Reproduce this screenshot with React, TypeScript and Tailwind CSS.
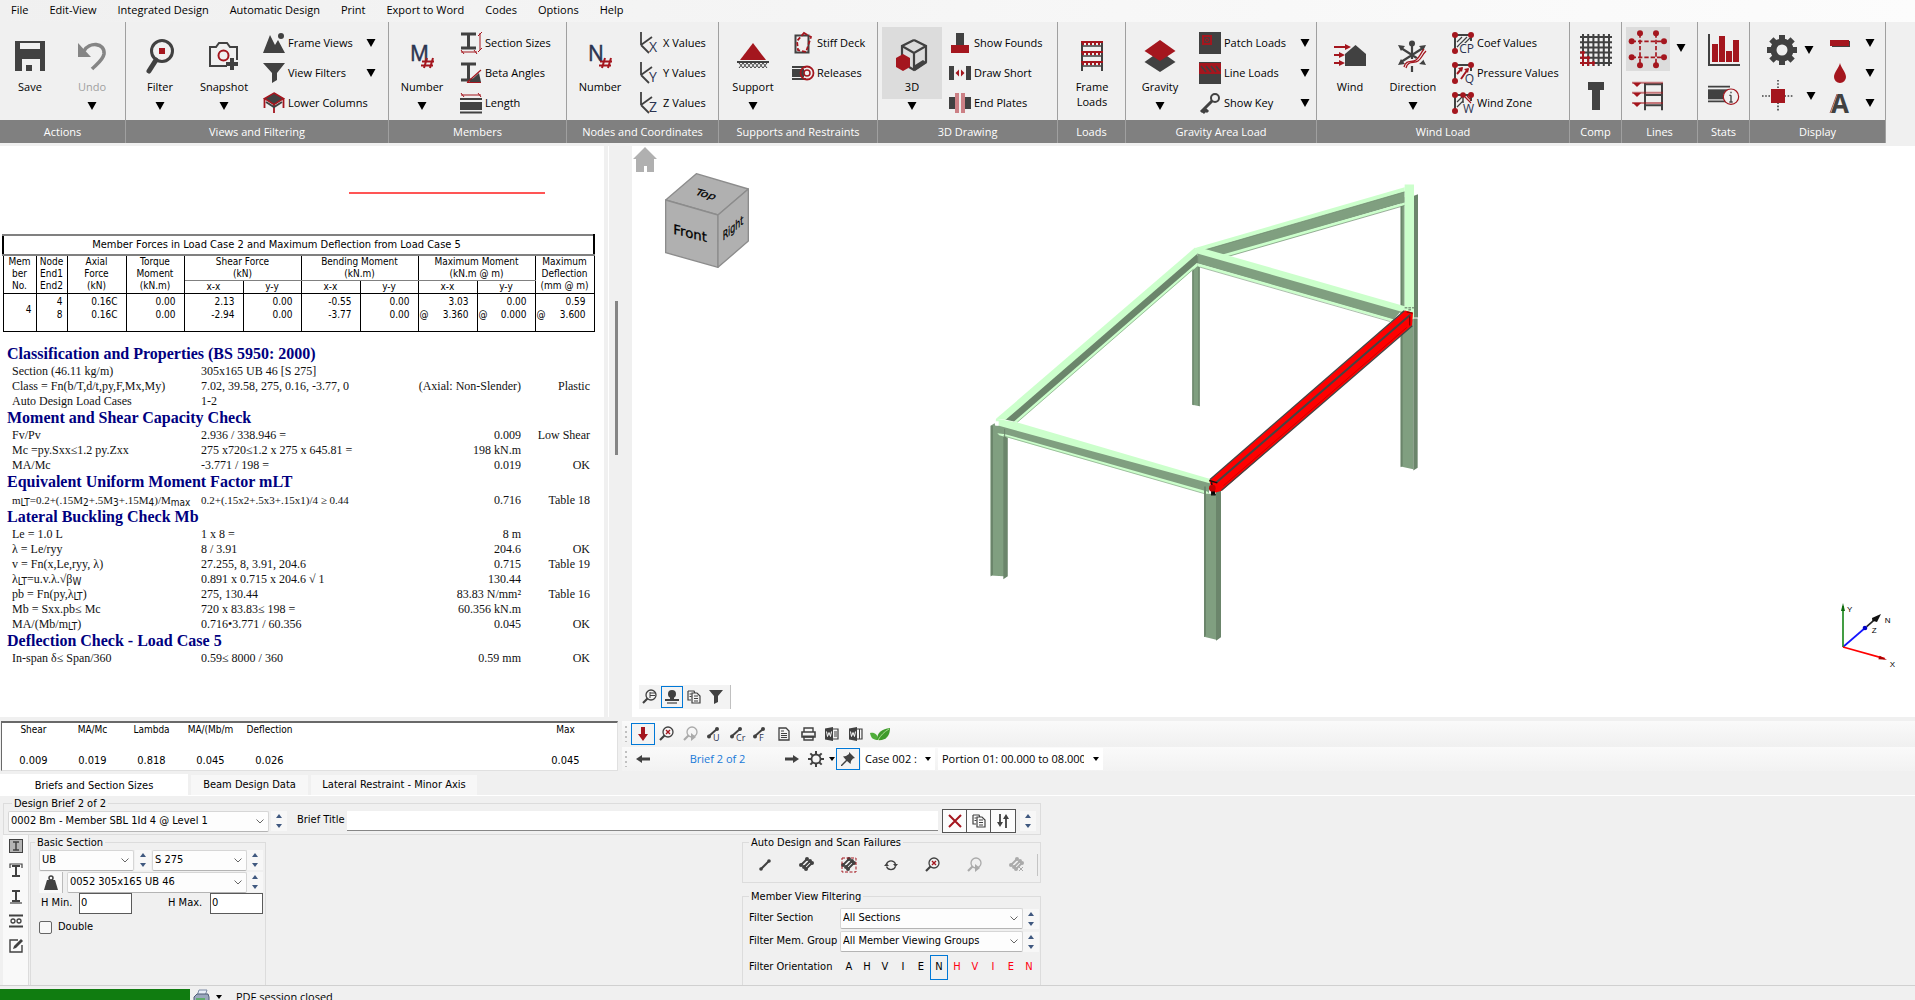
import React from 'react';

const D = '#414141';
const R = '#a4161e';
const UI = "font-['Open_Sans','Noto_Sans',sans-serif]";

type Kids = { children?: React.ReactNode };

function Ic({ w, h, vb, children }: { w: number; h: number; vb?: string } & Kids) {
  return (
    <svg width={w} height={h} viewBox={vb ?? `0 0 ${w} ${h}`} fill="none" className="shrink-0 overflow-visible" aria-hidden="true">
      {children}
    </svg>
  );
}

function Caret() {
  return (
    <Ic w={10} h={8}>
      <path d="M0.5 0h9L5 8z" fill="#000" />
    </Ic>
  );
}

/* ---------- ribbon building blocks ---------- */

function Group({ label, width, children }: { label: string; width: string } & Kids) {
  return (
    <section className={`${width} flex shrink-0 flex-col border-r border-[#a0a0a0]`}>
      <div className="flex h-[98px] pt-1.5">{children}</div>
      <h2 className="flex h-[23px] items-center justify-center bg-[#808080] pt-px text-white">{label}</h2>
    </section>
  );
}

function Big({ icon, label, width, arrow, muted, second }: { icon: React.ReactNode; label: string; width: string; arrow?: boolean; muted?: boolean; second?: string }) {
  return (
    <button className={`${width} flex shrink-0 flex-col items-center`}>
      <span className="flex h-[51px] items-center justify-center pt-1">{icon}</span>
      <span className={muted ? 'leading-[15px] text-[#a0a0a0]' : 'leading-[15px]'}>{label}</span>
      {second && <span className="leading-[15px]">{second}</span>}
      {arrow && (
        <span className="mt-2">
          <Caret />
        </span>
      )}
    </button>
  );
}

function Small({ icon, label, arrow, name }: { icon: React.ReactNode; label?: string; arrow?: boolean; name?: string }) {
  return (
    <button className="flex h-[30px] w-full items-center gap-0.5 whitespace-nowrap" aria-label={name}>
      <span className="flex w-6 justify-center">{icon}</span>
      {label && <span>{label}</span>}
      {arrow && (
        <span className="ml-auto">
          <Caret />
        </span>
      )}
    </button>
  );
}

/* ---------- ribbon icons ---------- */

const SaveIcon = (
  <Ic w={30} h={30}>
    <path fillRule="evenodd" fill={D} d="M0 0h30v30h-5V18H7v12H0zM5 2v6h20V2z" />
    <rect x="11" y="24" width="6" height="6" fill={D} />
  </Ic>
);
const UndoIcon = (
  <Ic w={30} h={30}>
    <path d="M7 10C12 1 28 1 27 13C26 19 20 23 15 28" stroke="#858585" strokeWidth="3.6" />
    <path d="M1 2v14h13z" fill="#858585" />
  </Ic>
);
const FilterIcon = (
  <Ic w={28} h={36}>
    <circle cx="16" cy="13" r="10.5" stroke={D} strokeWidth="3" />
    <path d="M10 22L3 33" stroke={D} strokeWidth="5" strokeLinecap="round" />
    <rect x="13" y="10" width="6" height="6" fill={R} />
  </Ic>
);
const SnapshotIcon = (
  <Ic w={32} h={30}>
    <path d="M19 25H2V6h6l3-4h8l3 4h7v13" stroke={D} strokeWidth="2" />
    <circle cx="15.5" cy="14.500" r="5" stroke={R} strokeWidth="2" />
    <path d="M24 17v12M18 23h12" stroke={D} strokeWidth="4" />
  </Ic>
);
const FrameViewsIcon = (
  <Ic w={22} h={20}>
    <path d="M0 20L7 2l5 10 3-5 7 13z" fill={D} />
    <circle cx="18" cy="3" r="3" fill={D} />
  </Ic>
);
const FunnelIcon = (
  <Ic w={22} h={20}>
    <path d="M0 0h22l-8 10v7l-5 3V10z" fill={D} />
  </Ic>
);
const LowerColumnsIcon = (
  <Ic w={22} h={22}>
    <path d="M11 1l9.500 5.500-9.500 6-9.500-6z" fill={D} stroke={R} strokeWidth="1.500" />
    <path d="M1.500 6v10M20.500 6v10M11 13v8" stroke={R} strokeWidth="1.800" />
    <path d="M3 10l8 5 8-5" stroke={D} strokeWidth="2" />
  </Ic>
);
const SectionSizesIcon = (
  <Ic w={22} h={22}>
    <path d="M1 2h15M1 16h15M8.500 2v14" stroke={D} strokeWidth="3" />
    <path d="M20 1v17M18 4l4-4M18 20l4-4M1 20h16M1 18l3 4M14 18l3 4" stroke={R} strokeWidth="1" />
  </Ic>
);
const BetaIcon = (
  <Ic w={22} h={22}>
    <path d="M1 2h15M1 18h12M8.500 2v16" stroke={D} strokeWidth="3" />
    <path d="M9 20L19 11l2 9z" fill={D} />
    <path d="M7 20.500h14M7 20.500L21 8" stroke={R} strokeWidth="1.200" />
  </Ic>
);
const LengthIcon = (
  <Ic w={22} h={22}>
    <path d="M1 3h20M1 1l3 4M18 1l3 4" stroke={R} strokeWidth="1" />
    <path d="M0 7h22M0 20.500h22" stroke={D} strokeWidth="2" />
    <rect x="0" y="10" width="22" height="8" fill={D} />
  </Ic>
);
function NumberIcon({ c }: { c: string }) {
  return (
    <Ic w={24} h={26}>
      <text x="0" y="18" fontSize="21" fill="#2b3350" stroke="#2b3350" strokeWidth="0.500" fontFamily="Open Sans, sans-serif">{c}</text>
      <path d="M17 15l-3 10M23 15l-3 10M12 18.500h12M11 22.500h12" stroke={R} strokeWidth="2" />
    </Ic>
  );
}
function AxisIcon({ c }: { c: string }) {
  return (
    <Ic w={20} h={22}>
      <path d="M2 0v13M2 13L13 5M2 13l8 8" stroke={D} strokeWidth="1.800" />
      <text x="10" y="20" fontSize="14" fill="#2b3350" fontFamily="Open Sans, sans-serif">{c}</text>
    </Ic>
  );
}
const SupportIcon = (
  <Ic w={32} h={26}>
    <path d="M16 0l13 17H3z" fill={R} />
    <path d="M0 19h32" stroke={D} strokeWidth="2" />
    <path d="M2 25l4-5 4 5 4-5 4 5 4-5 4 5 4-5M2 20l4 5 4-5 4 5 4-5 4 5 4-5 4 5" stroke={D} strokeWidth="1" />
  </Ic>
);
const StiffDeckIcon = (
  <Ic w={20} h={22}>
    <rect x="2.500" y="3.500" width="13" height="17" stroke={D} strokeWidth="2" />
    <path d="M11 1l7 4-5 15-8-2-1-9z" stroke={R} strokeWidth="1.800" strokeDasharray="4 2" />
  </Ic>
);
const ReleasesIcon = (
  <Ic w={24} h={16}>
    <path d="M1 2h14M1 14h14" stroke={D} strokeWidth="2" />
    <rect x="1" y="4" width="12" height="8" fill={D} />
    <circle cx="16" cy="8" r="6.500" stroke={R} strokeWidth="1.800" />
    <circle cx="16" cy="8" r="3" stroke={R} strokeWidth="1.500" />
  </Ic>
);
const CubeIcon = (
  <Ic w={34} h={34}>
    <path d="M19 2l12 6v16l-12 8-5-3M19 2L7 8v9M7 8l12 7 12-7M19 15v16" stroke={D} strokeWidth="2.200" />
    <path d="M20 33l12-8-4-3-8 5z" fill={D} />
    <path d="M8 16l7 4v9l-7 4-7-4v-9z" fill={R} />
  </Ic>
);
const FoundsIcon = (
  <Ic w={20} h={20}>
    <rect x="6" y="0" width="8" height="12" fill={D} />
    <rect x="1" y="12" width="18" height="8" fill={R} />
  </Ic>
);
const DrawShortIcon = (
  <Ic w={22} h={14}>
    <path d="M0 0h5v14H0zM17 0h5v14h-5z" fill={D} />
    <path d="M10 3.500v7L6.500 7zM12 3.500v7L15.500 7z" fill={R} />
  </Ic>
);
const EndPlatesIcon = (
  <Ic w={22} h={20}>
    <path d="M0 4h6v12H0zM16 4h6v12h-6z" fill={D} />
    <path d="M6 0h4v20H6zM12 0h4v20h-4z" fill="#cc8085" />
  </Ic>
);
const FrameLoadsIcon = (
  <Ic w={24} h={32}>
    <path d="M2 1v30M22 1v30" stroke={D} strokeWidth="2" />
    {[2, 12, 22].map((y) => (
      <g key={y}>
        <path d={`M1 ${y}h22`} stroke={R} strokeWidth="2" />
        <path d={`M2 ${y + 2}h20`} stroke={R} strokeWidth="2.500" strokeDasharray="2 2" />
        <path d={`M1 ${y + 4}h22`} stroke={D} strokeWidth="1.500" />
      </g>
    ))}
  </Ic>
);
const GravityIcon = (
  <Ic w={32} h={32}>
    <path d="M16 11l15.500 11L16 32 0.500 22z" fill={D} />
    <path d="M16 0l15.500 11L16 21 0.500 11z" fill={R} />
  </Ic>
);
const PatchIcon = (
  <Ic w={22} h={22}>
    <rect width="22" height="22" fill={D} />
    <rect x="3" y="3" width="10" height="10" fill={R} />
    <path d="M5.500 5.500h5v5h-5zM5.500 5.500l5 5M10.500 5.500l-5 5" stroke={D} strokeWidth="0.800" />
  </Ic>
);
const LineLoadsIcon = (
  <Ic w={22} h={22}>
    <rect width="22" height="22" fill={D} />
    <rect y="1" width="22" height="11" fill={R} />
    <path d="M2 4l5 6M7 4l5 6M12 4l5 6M17 4l4 5" stroke={D} strokeWidth="1.500" />
  </Ic>
);
const KeyIcon = (
  <Ic w={22} h={20}>
    <circle cx="16" cy="5" r="4" stroke={D} strokeWidth="2" />
    <path d="M13 8L2 19M5 15l4 4M3 17l3 3" stroke={D} strokeWidth="3" />
  </Ic>
);
const WindIcon = (
  <Ic w={32} h={24}>
    <path d="M11 10L21.500 1 32 10v12H11z" fill={D} />
    <path d="M0 3h12M0 11h6M0 19h6" stroke={R} strokeWidth="2" />
    <path d="M11 0l6 3-6 3zM5 8l6 3-6 3zM5 16l6 3-6 3z" fill={R} />
  </Ic>
);
const DirectionIcon = (
  <Ic w={32} h={32}>
    <circle cx="15" cy="3.500" r="3" fill={D} />
    <path d="M15 4v15M15 26v6M4 8l22 14M26 8L4 22" stroke={D} strokeWidth="2.200" />
    <path d="M1 5l7 1-4 5zM29 5l-7 1 4 5zM1 25l7-1-4-5zM29 25l-7-1 4-5z" fill={D} />
    <path d="M8 27c2-8 8-4 12-7s4-5 8-9M10 29c2-8 8-4 12-7s4-5 8-9" stroke="#f0f0f0" strokeWidth="3" />
    <path d="M7 27c2-8 8-4 12-7s4-6 8-11M9 28c2-8 8-4 12-7s4-6 8-10" stroke={R} strokeWidth="1.300" />
  </Ic>
);
function ZoneIcon({ c, kind }: { c: string; kind: 'hatch' | 'arrows' | 'zones' }) {
  return (
    <Ic w={22} h={22}>
      <path d="M3 19V3h16v6" stroke={D} strokeWidth="2" />
      {kind === 'hatch' && <path d="M5 10l5-5M5 15L15 5M8 16L18 6" stroke={D} strokeWidth="1.200" />}
      {kind === 'arrows' && (
        <>
          <path d="M5 12l5-6M9 17l7-10" stroke={R} strokeWidth="2" />
          <path d="M6 6l5-1-1 5zM12 7l5-1-1 5z" fill={R} />
        </>
      )}
      {kind === 'zones' && (
        <>
          <path d="M11 3v8" stroke={D} strokeWidth="1.500" />
          <path d="M5 10l5-5M5 15l6-6" stroke={D} strokeWidth="1.200" />
          <path d="M12 4l7 7M15 4l4 4" stroke={R} strokeWidth="1.200" />
          <circle cx="11" cy="3" r="2.800" fill={R} />
        </>
      )}
      <circle cx="3" cy="3" r="3" fill={R} />
      <circle cx="19" cy="3" r="3" fill={R} />
      <circle cx="3" cy="19" r="3" fill={R} />
      <text x="22" y="21" textAnchor="end" fontSize="12" fill="#2b3350" stroke="#f0f0f0" strokeWidth="2" paintOrder="stroke" fontFamily="Open Sans, sans-serif">{c}</text>
    </Ic>
  );
}
const GridIcon = (
  <Ic w={32} h={32}>
    <path d="M3 0v32M8.200 0v32M13.400 0v32M18.600 0v32M23.800 0v32M29 0v32M0 3h32M0 8.200h32M0 13.400h32M0 18.600h32M0 23.800h32M0 29h32" stroke={D} strokeWidth="2" />
    <path d="M3 17v15M8.200 22v10M13.400 27v5M0 18.600h5M0 23.800h10M0 29h15" stroke={R} strokeWidth="2" />
  </Ic>
);
const TIcon = (
  <Ic w={16} h={28}>
    <path d="M0 0h16v8h-4v20H4V8H0z" fill={D} />
  </Ic>
);
const LinesIcon = (
  <Ic w={38} h={38} vb="210 32 114 114">
    <path d="M218 66h97M218 114h97M243 42v96M291 42v96" stroke={R} strokeWidth="5" strokeDasharray="13 6" />
    {[[243, 42], [291, 42], [243, 138], [291, 138], [218, 66], [315, 66], [218, 114], [315, 114]].map(([x, y]) => (
      <circle key={`${x}-${y}`} cx={x} cy={y} r="9" fill={R} />
    ))}
  </Ic>
);
const LevelsIcon = (
  <Ic w={32} h={30} vb="219 184 96 90">
    <path d="M258 190v82M309 190v82M255 194h57M255 226h57M255 257h57" stroke={D} strokeWidth="6" />
    <path d="M219 189h93M219 219h93M219 250h93" stroke="#a4161e" strokeOpacity="0.55" strokeWidth="6" />
    <path d="M221 189h26l-13 13zM221 219h26l-13 13zM221 249h26l-13 13z" fill={R} />
  </Ic>
);
const StatsIcon = (
  <Ic w={32} h={32} vb="447 42 96 96">
    <path d="M450 42v93h93" stroke={D} strokeWidth="6" />
    <path d="M459 72h18v54h-18zM480 48h18v78h-18zM501 93h18v33h-18zM522 60h18v66h-18z" fill={R} />
  </Ic>
);
const InfoIcon = (
  <Ic w={32} h={20} vb="447 202 96 60">
    <path d="M447 204h66M447 248h66" stroke={D} strokeWidth="5" />
    <rect x="447" y="212" width="60" height="30" fill={D} />
    <circle cx="516" cy="234" r="23" fill="#f0f0f0" stroke={R} strokeWidth="3.500" />
    <path d="M516 230v20M511 250h10M511 230h5M516 219v5" stroke={D} strokeWidth="4" />
  </Ic>
);
const GearIcon = (
  <Ic w={30} h={30}>
    <circle cx="15" cy="15" r="8.500" stroke={D} strokeWidth="6" />
    {[0, 45, 90, 135, 180, 225, 270, 315].map((a) => (
      <rect key={a} x="12" y="0" width="6" height="6" fill={D} transform={`rotate(${a} 15 15)`} />
    ))}
  </Ic>
);
const TargetIcon = (
  <Ic w={32} h={32}>
    <path d="M16 0v32M0 16h32" stroke={D} strokeWidth="1.600" strokeDasharray="1.600 1.600" />
    <rect x="9" y="9" width="14" height="14" fill={R} />
  </Ic>
);

function Ribbon() {
  return (
    <div className="flex shrink-0 bg-[#f0f0f0]">
      <Group label="Actions" width="w-[126px]">
        <Big icon={SaveIcon} label="Save" width="w-[60px]" />
        <Big icon={UndoIcon} label="Undo" width="w-16" arrow muted />
      </Group>
      <Group label="Views and Filtering" width="w-[263px]">
        <Big icon={FilterIcon} label="Filter" width="w-[68px]" arrow />
        <Big icon={SnapshotIcon} label="Snapshot" width="w-[60px]" arrow />
        <div className="grow pr-3 pl-2">
          <Small icon={FrameViewsIcon} label="Frame Views" arrow />
          <Small icon={FunnelIcon} label="View Filters" arrow />
          <Small icon={LowerColumnsIcon} label="Lower Columns" />
        </div>
      </Group>
      <Group label="Members" width="w-[178px]">
        <Big icon={<NumberIcon c="M" />} label="Number" width="w-[66px]" arrow />
        <div className="grow pl-1">
          <Small icon={SectionSizesIcon} label="Section Sizes" />
          <Small icon={BetaIcon} label="Beta Angles" />
          <Small icon={LengthIcon} label="Length" />
        </div>
      </Group>
      <Group label="Nodes and Coordinates" width="w-[152px]">
        <Big icon={<NumberIcon c="N" />} label="Number" width="w-[66px]" />
        <div className="grow pl-1">
          <Small icon={<AxisIcon c="X" />} label="X Values" />
          <Small icon={<AxisIcon c="Y" />} label="Y Values" />
          <Small icon={<AxisIcon c="Z" />} label="Z Values" />
        </div>
      </Group>
      <Group label="Supports and Restraints" width="w-[159px]">
        <Big icon={SupportIcon} label="Support" width="w-[68px]" arrow />
        <div className="grow pl-1">
          <Small icon={StiffDeckIcon} label="Stiff Deck" />
          <Small icon={ReleasesIcon} label="Releases" />
        </div>
      </Group>
      <Group label="3D Drawing" width="w-[180px]">
        <div className="flex w-16 flex-col items-center pl-1">
          <button className="-mt-px flex h-[72px] w-[60px] flex-col items-center bg-[#dcdcdc]">
            <span className="flex h-[52px] items-center pt-1">{CubeIcon}</span>
            <span className="leading-[15px]">3D</span>
          </button>
          <button className="mt-[3px]" aria-label="3D options">
            <Caret />
          </button>
        </div>
        <div className="grow pl-1.5">
          <Small icon={FoundsIcon} label="Show Founds" />
          <Small icon={DrawShortIcon} label="Draw Short" />
          <Small icon={EndPlatesIcon} label="End Plates" />
        </div>
      </Group>
      <Group label="Loads" width="w-[68px]">
        <Big icon={FrameLoadsIcon} label="Frame" second="Loads" width="w-[68px]" />
      </Group>
      <Group label="Gravity Area Load" width="w-[191px]">
        <Big icon={GravityIcon} label="Gravity" width="w-[68px]" arrow />
        <div className="grow pr-1.5 pl-1">
          <Small icon={PatchIcon} label="Patch Loads" arrow />
          <Small icon={LineLoadsIcon} label="Line Loads" arrow />
          <Small icon={KeyIcon} label="Show Key" arrow />
        </div>
      </Group>
      <Group label="Wind Load" width="w-[253px]">
        <Big icon={WindIcon} label="Wind" width="w-[66px]" />
        <Big icon={DirectionIcon} label="Direction" width="w-[60px]" arrow />
        <div className="grow pl-2">
          <Small icon={<ZoneIcon c="CP" kind="hatch" />} label="Coef Values" />
          <Small icon={<ZoneIcon c="Q" kind="arrows" />} label="Pressure Values" />
          <Small icon={<ZoneIcon c="W" kind="zones" />} label="Wind Zone" />
        </div>
      </Group>
      <Group label="Comp" width="w-[52px]">
        <div className="flex grow flex-col items-center gap-4 pt-1.5">
          <button aria-label="Composite grid">{GridIcon}</button>
          <button aria-label="Composite tee">{TIcon}</button>
        </div>
      </Group>
      <Group label="Lines" width="w-[76px]">
        <div className="flex flex-col items-center gap-2.5 pl-1">
          <button className="-mt-px flex h-11 w-11 items-center justify-center bg-[#dcdcdc]" aria-label="Grid lines">{LinesIcon}</button>
          <button aria-label="Level lines">{LevelsIcon}</button>
        </div>
        <button className="mt-4 ml-1.5 h-2" aria-label="Grid line options">
          <Caret />
        </button>
      </Group>
      <Group label="Stats" width="w-[52px]">
        <div className="flex grow flex-col items-center gap-5 pt-1.5">
          <button aria-label="Statistics chart">{StatsIcon}</button>
          <button aria-label="Statistics details">{InfoIcon}</button>
        </div>
      </Group>
      <Group label="Display" width="w-[136px]">
        <div className="flex flex-col pt-0.5 pl-2.5">
          <button className="flex h-10 items-center gap-1" aria-label="Display settings">
            <span className="flex w-10 justify-center pl-1">{GearIcon}</span>
            <Caret />
          </button>
          <button className="flex h-12 items-center gap-1.5 pt-1" aria-label="Display target">
            <span className="flex w-10 justify-center pr-1">{TargetIcon}</span>
            <Caret />
          </button>
        </div>
        <div className="flex grow flex-col pr-2.5 pl-3">
          <Small arrow name="Line style" icon={<Ic w={20} h={8}><path d="M2 2h18v6H2z" fill={D} /><path d="M0 1h19v6H0z" fill={R} /></Ic>} />
          <Small arrow name="Colour" icon={<Ic w={12} h={20}><path d="M6 0c1 5 6 9 6 14a6 6 0 0 1-12 0C0 9 5 5 6 0z" fill={R} /></Ic>} />
          <Small
            arrow
            name="Font"
            icon={
              <Ic w={22} h={22}>
                <text x="2" y="21" fontSize="26" fontWeight="bold" fill={D} fontFamily="Open Sans, sans-serif">A</text>
                <path d="M1 21L8 2" stroke="#8a3b3f" strokeWidth="0.800" />
              </Ic>
            }
          />
        </div>
      </Group>
    </div>
  );
}

/* ---------- report pane ---------- */

function ForcesTable() {
  const cell = 'border border-black p-0 font-normal align-top';
  const num = 'border-x border-black p-0 text-right align-top';
  return (
    <table className="ml-0.5 w-[592px] table-fixed border-collapse border border-black text-[10px] leading-[13px]">
      <colgroup>
        {[33, 31, 59, 58, 59, 58, 59, 58, 59, 58, 59].map((w, i) => (
          <col key={i} style={{ width: w }} />
        ))}
      </colgroup>
      <thead className="leading-3">
        <tr>
          <th colSpan={11} className="h-5 border-2 border-[#808080] border-x-black p-0 pr-11 text-[11px] font-normal">
            Member Forces in Load Case 2 and Maximum Deflection from Load Case 5
          </th>
        </tr>
        <tr>
          <th rowSpan={2} className={cell}>Mem<br />ber<br />No.</th>
          <th rowSpan={2} className={cell}>Node<br />End1<br />End2</th>
          <th rowSpan={2} className={cell}>Axial<br />Force<br />(kN)</th>
          <th rowSpan={2} className={cell}>Torque<br />Moment<br />(kN.m)</th>
          <th colSpan={2} className="border border-black border-b-[#808080] p-0 align-top font-normal">Shear Force<br />(kN)</th>
          <th colSpan={2} className="border border-black border-b-[#808080] p-0 align-top font-normal">Bending Moment<br />(kN.m)</th>
          <th colSpan={2} className="border border-black border-b-[#808080] p-0 align-top font-normal">Maximum Moment<br />(kN.m @ m)</th>
          <th rowSpan={2} className={cell}>Maximum<br />Deflection<br />(mm @ m)</th>
        </tr>
        <tr>
          {['x-x', 'y-y', 'x-x', 'y-y', 'x-x', 'y-y'].map((t, i) => (
            <th key={i} className={cell}>{t}</th>
          ))}
        </tr>
      </thead>
      <tbody>
        <tr className="h-[38px]">
          <td className="border border-black p-0 pr-1 pb-1.5 text-right">4</td>
          <td className={`${num} pt-px pr-1`}>4<br />8</td>
          <td className={`${num} pt-px pr-2`}>0.16C<br />0.16C</td>
          {['0.00|0.00', '2.13|-2.94', '0.00|0.00', '-0.55|-3.77', '0.00|0.00'].map((v, i) => (
            <td key={i} className={`${num} pt-px pr-2`}>{v.split('|')[0]}<br />{v.split('|')[1]}</td>
          ))}
          {['3.03|3.360', '0.00|0.000', '0.59|3.600'].map((v) => (
            <td key={v} className={`${num} pt-px pr-2`}>
              {v.split('|')[0]}
              <span className="flex justify-between pl-px">
                <span>@</span>
                <span>{v.split('|')[1]}</span>
              </span>
            </td>
          ))}
        </tr>
      </tbody>
    </table>
  );
}

const S = ({ children }: Kids) => <span className="relative top-0.5 font-['DejaVu_Sans_Condensed',sans-serif] text-[10px]">{children}</span>;

type Row = [React.ReactNode, string, string, string];
const sections: { title: string; rows: Row[]; small?: boolean }[] = [
  {
    title: 'Classification and Properties (BS 5950: 2000)',
    rows: [
      ['Section (46.11 kg/m)', '305x165 UB 46 [S 275]', '', ''],
      ['Class = Fn(b/T,d/t,py,F,Mx,My)', '7.02, 39.58, 275, 0.16, -3.77, 0', '(Axial: Non-Slender)', 'Plastic'],
      ['Auto Design Load Cases', '1-2', '', ''],
    ],
  },
  {
    title: 'Moment and Shear Capacity Check',
    rows: [
      ['Fv/Pv', '2.936 / 338.946 =', '0.009', 'Low Shear'],
      ['Mc =py.Sxx≤1.2 py.Zxx', '275 x720≤1.2 x 275 x 645.81 =', '198 kN.m', ''],
      ['MA/Mc', '-3.771 / 198 =', '0.019', 'OK'],
    ],
  },
  {
    title: 'Equivalent Uniform Moment Factor mLT',
    small: true,
    rows: [
      [<>m<S>LT</S>=0.2+(.15M<S>2</S>+.5M<S>3</S>+.15M<S>4</S>)/M<S>max</S></>, '0.2+(.15x2+.5x3+.15x1)/4 ≥ 0.44', '0.716', 'Table 18'],
    ],
  },
  {
    title: 'Lateral Buckling Check Mb',
    rows: [
      ['Le = 1.0 L', '1 x 8 =', '8 m', ''],
      ['λ = Le/ryy', '8 / 3.91', '204.6', 'OK'],
      ['v = Fn(x,Le,ryy, λ)', '27.255, 8, 3.91, 204.6', '0.715', 'Table 19'],
      [<>λ<S>LT</S>=u.v.λ.√β<S>W</S></>, '0.891 x 0.715 x 204.6 √ 1', '130.44', ''],
      [<>pb = Fn(py,λ<S>LT</S>)</>, '275, 130.44', '83.83 N/mm²', 'Table 16'],
      ['Mb = Sxx.pb≤ Mc', '720 x 83.83≤ 198 =', '60.356 kN.m', ''],
      [<>MA/(Mb/m<S>LT</S>)</>, '0.716•3.771 / 60.356', '0.045', 'OK'],
    ],
  },
  { title: 'Deflection Check - Load Case 5', rows: [['In-span δ≤ Span/360', '0.59≤ 8000 / 360', '0.59 mm', 'OK']] },
];

function Report() {
  return (
    <div className="flex min-h-0 grow">
      <div className="w-[604px] shrink-0 overflow-hidden bg-white">
        <div className="mt-[46px] mb-10 ml-[349px] h-0.5 w-[196px] bg-[#f55]" />
        <ForcesTable />
        <div className="mt-3 font-['Liberation_Serif',serif] text-[12px] leading-[15px] text-[#111]">
          {sections.map((s) => (
            <section key={s.title} className="-mb-px">
              <h3 className="h-5 pl-[7px] text-[16px] leading-[19px] font-bold text-[#00007f]">{s.title}</h3>
              <table className="ml-3 w-[578px] table-fixed whitespace-nowrap">
                <colgroup>
                  <col className="w-[189px]" />
                  <col className="w-[180px]" />
                  <col className="w-[140px]" />
                  <col />
                </colgroup>
                <tbody>
                  {s.rows.map(([a, b, c, d], i) => (
                    <tr key={i} className={s.small ? 'h-4' : 'h-[15px]'}>
                      <td className={s.small ? 'p-0 text-[11px]' : 'p-0'}>{a}</td>
                      <td className={s.small ? 'p-0 text-[11px]' : 'p-0'}>{b}</td>
                      <td className="p-0 text-right">{c}</td>
                      <td className="p-0 text-right">{d}</td>
                    </tr>
                  ))}
                </tbody>
              </table>
            </section>
          ))}
        </div>
      </div>
      <div className="ml-1 w-3.5 border-l border-white pt-[155px] pl-1.5">
        <div className="h-[154px] w-[3px] bg-[#858585]" />
      </div>
    </div>
  );
}

function Results() {
  const cols = [['Shear', '0.009'], ['MA/Mc', '0.019'], ['Lambda', '0.818'], ['MA/(Mb/m', '0.045'], ['Deflection', '0.026']];
  return (
    <dl className="mt-1 ml-px flex h-[50px] w-[617px] shrink-0 border border-[#e0e0e0] border-t-2 border-t-[#696969] border-l-[#696969] bg-white pl-0.5 text-center">
      {cols.map(([k, v]) => (
        <div key={k} className="w-[59px] pt-px">
          <dt className="text-[10px] leading-3 whitespace-nowrap">{k}</dt>
          <dd className="mt-[18px] leading-[14px]">{v}</dd>
        </div>
      ))}
      <div className="mr-[22px] ml-auto w-[59px] pt-px">
        <dt className="text-[10px] leading-3">Max</dt>
        <dd className="mt-[18px] leading-[14px]">0.045</dd>
      </div>
    </dl>
  );
}

/* ---------- 3D viewport ---------- */

const L = '#ccffcc';
const M = '#809f80';
const K = '#6b856b';

function Frame() {
  return (
    <svg className="h-full w-full" viewBox="632 146 1283 570" role="img" aria-label="Structural frame">
      <g transform="translate(960 170) scale(0.33333)">
        <path d="M697 280h22v427l-22-4z" fill={M} />
        <path d="M697 280h4v424l-4-1zM715 280h4v427l-4-1z" fill={K} />
        {/* right column */}
        <path d="M1322 80h12v340h-12z" fill={M} />
        <path d="M1322 100h5v340h-5zM1362 76l12-5v370h-12z" fill={K} />
        <path d="M1322 420h38v476l-38-8z" fill={M} />
        <path d="M1322 420h6v466l-6 4zM1360 444h13v448l-13 8z" fill={K} />
        {/* rear beam */}
        <path d="M708 232L1334 50v16L735 242z" fill={L} />
        <path d="M735 238L1334 64v32L792 254z" fill={M} />
        <path d="M785 253L1334 96v8L802 259z" fill={L} />
        <path d="M735 238L1334 64M800 259L1334 105" stroke={K} strokeWidth="2" />
        <path d="M1334 42h28v380h-28z" fill={L} />
        {/* left beam */}
        <path d="M160 752L712 274v13L172 756z" fill={L} />
        <path d="M135 747L712 246v30L162 753z" fill={K} />
        <path d="M108 745L704 232l10 16L137 748z" fill={L} />
        <path d="M172 755L700 296" stroke={M} strokeWidth="2" />
        {/* centre to right beam */}
        <path d="M712 246L1325 420l-25 28L712 279z" fill={M} />
        <path d="M712 278L1300 446l-3 7L712 287z" fill={L} />
        <path d="M720 290L1290 453" stroke={M} strokeWidth="2" />
        <path d="M704 232l34 4L1345 410l-20 14L712 249z" fill={L} />
        <path d="M713 256v22" stroke={K} strokeWidth="3" />
        <path d="M1334 412h28v32l-12 6-16-20z" fill={L} />
        <path d="M1334 412h28M1345 418h10" stroke="#222" strokeWidth="2" strokeDasharray="8 3" />
        {/* front left column */}
        <path d="M92 766l14-9 36 20v441l-50-3z" fill={M} />
        <path d="M92 766h7v446l-7 6zM130 775h13v442l-13 9z" fill={K} />
        {/* front beam */}
        <path d="M114 762L752 936l-6 34L130 796z" fill={M} />
        <path d="M112 788l24 3L742 963l10 12L118 794z" fill={L} />
        <path d="M130 796L735 970" stroke={M} strokeWidth="2" />
        <path d="M134 775v30" stroke={K} strokeWidth="3" />
        <path d="M108 745l62 10L766 930l-14 9L106 763z" fill={L} />
        <path d="M102 752h14v14h-10z" fill="#fff" />
        {/* front column */}
        <path d="M732 970h50v428l-13 10-37-9z" fill={M} />
        <path d="M732 948h6v446l-6 6zM768 956h15v444l-15 11z" fill={K} />
        {/* selected member */}
        <path d="M748 929L1335 420l24 7-3 38L785 961l-28 8z" fill="#fe0000" />
        <path d="M750 927L1333 421M784 960L1357 466" stroke="#444" strokeWidth="4" />
        <path d="M768 937L1351 433" stroke="#444" strokeWidth="6" />
        <path d="M790 946L1340 471" stroke="#b00000" strokeWidth="2" />
        <path d="M1349 437v28M1340 424l18 4" stroke="#8a0000" strokeWidth="4" />
        <path d="M748 930l24 7M755 935v38h12" stroke="#111" strokeWidth="4" />
        <circle cx="757" cy="953" r="10" fill="#c00000" />
      </g>
    </svg>
  );
}

function ViewCube() {
  return (
    <svg width="84" height="96" viewBox="135 100 252 288" role="img" aria-label="View cube">
      <g fill="#b0b0b0" stroke="#8c8c8c" strokeWidth="4" strokeLinejoin="round">
        <path d="M137 181L229 102l156 46-91 78z" />
        <path d="M137 181l157 45v157l-157-44z" />
        <path d="M294 226l91-78v156l-91 79z" />
      </g>
      <g fontFamily="DejaVu Sans, sans-serif" fill="#000" stroke="#000" strokeWidth="0.8">
        <text fontSize="40" transform="matrix(1 0.25 0 1 160 282)">Front</text>
        <text fontSize="38" transform="matrix(0.62 -0.52 0 1 308 304)">Right</text>
        <text fontSize="36" transform="matrix(0.98 0.27 -0.5 0.65 222 164)">Top</text>
      </g>
    </svg>
  );
}

function Triad() {
  return (
    <svg width="64" height="72" viewBox="60 60 192 216" role="img" aria-label="Axes" fontFamily="Liberation Sans, sans-serif" fontSize="24">
      <path d="M69 198L135 141" stroke="#1414ff" strokeWidth="5" />
      <path d="M140 137l35-31" stroke="#222" strokeWidth="5" />
      <path d="M69 198V75" stroke="#1f8a1f" strokeWidth="5" />
      <path d="M69 198l125 35" stroke="#f00" strokeWidth="5" />
      <path d="M69 66l6 24H63z" fill="#0e6b0e" />
      <path d="M201 236l-26-1 4-11z" fill="#a00" />
      <path d="M183 99l-12 24-14-4-1-8z" fill="#111" />
      <circle cx="135" cy="141" r="7" fill="#0000c8" />
      <text x="81" y="93">Y</text>
      <text x="194" y="126">N</text>
      <text x="155" y="156">Z</text>
      <text x="209" y="258">X</text>
    </svg>
  );
}

/* ---------- small toolbar icons ---------- */

const Mag = ({ c = D, children }: { c?: string } & Kids) => (
  <Ic w={16} h={16}>
    <circle cx="9" cy="6" r="5" stroke={c} strokeWidth="1.300" />
    <path d="M5.500 9.500L1 14" stroke={c} strokeWidth="2.200" />
    {children}
  </Ic>
);
const MagX = <Mag><path d="M7 4l4 4M11 4L7 8" stroke={R} strokeWidth="1.400" /></Mag>;
const MagNext = <Mag c="#aaaaaa"><path d="M8 7l5 4-5 4z" fill="#aaaaaa" /></Mag>;
const CopyIcon = (
  <Ic w={14} h={14}>
    <path d="M1 1h6l1 2M1 1v9h3M5 3h5l3 3v7H5z" stroke={D} strokeWidth="1.200" />
    <path d="M7 6h4M7 8.500h4M7 11h4M2.500 4h2M2.500 6.500h2" stroke={D} strokeWidth="1" />
  </Ic>
);
function Member({ c }: { c?: string }) {
  return (
    <Ic w={18} h={16}>
      <path d="M3 10L11 3" stroke={D} strokeWidth="2" />
      <circle cx="3" cy="10.500" r="2" fill={D} />
      <circle cx="11" cy="3" r="2" fill={D} />
      <text x="7" y="15" fontSize="9" fill="#2b3350" fontFamily="Open Sans, sans-serif">{c}</text>
    </Ic>
  );
}
function Multi({ c = D, children }: { c?: string } & Kids) {
  return (
    <Ic w={16} h={16}>
      {[[0, 0], [3, 2], [5, 4]].map(([x, y]) => (
        <g key={x}>
          <path d={`M${x + 2} ${y + 8}L${x + 8} ${y + 2}`} stroke={c} strokeWidth="1.800" />
          <circle cx={x + 2} cy={y + 8} r="2" fill={c} />
          <circle cx={x + 8} cy={y + 2} r="2" fill={c} />
        </g>
      ))}
      {children}
    </Ic>
  );
}
const WordIcon = ({ two }: { two?: boolean }) => (
  <Ic w={14} h={14}>
    <path d="M0 1.500l8-1.500v14l-8-1.500z" fill={D} />
    <path d="M1.500 4.500l1 5 1.500-4 1.500 4 1-5" stroke="#fff" strokeWidth="1" />
    <path d="M8 2h5v10H8" stroke={D} strokeWidth="1.200" />
    <path d={two ? 'M10.500 2v10' : 'M9 5h3M9 7h3M9 9h3'} stroke={D} strokeWidth="1" />
  </Ic>
);
const FilterSmall = <Ic w={14} h={14}><path d="M0 0h14L9 6v6l-4 2V6z" fill={D} /></Ic>;
const StampIcon = (
  <Ic w={14} h={14}>
    <circle cx="7" cy="4" r="4" fill={D} />
    <path d="M5 6h4v3h5v2H0V9h5z" fill={D} />
    <path d="M2 13h10" stroke={D} strokeWidth="1.200" />
  </Ic>
);

function Tool({ label, on, children }: { label: string; on?: boolean } & Kids) {
  return (
    <button
      aria-label={label}
      className={on ? 'flex h-[22px] w-6 shrink-0 items-center justify-center border border-[#0078d7] bg-[#f3f3f3]' : 'flex h-[22px] w-6 shrink-0 items-center justify-center'}
    >
      {children}
    </button>
  );
}

const Grip = () => <span className="mr-1 ml-[3px] h-4 w-0.5 shrink-0 bg-[repeating-linear-gradient(#c0c0c0_0_2px,transparent_2px_5px)]" />;
const MiniCaret = () => (
  <Ic w={6} h={4}>
    <path d="M0 0h6L3 4z" fill="#000" />
  </Ic>
);

function Viewer() {
  return (
    <div className="flex min-w-0 grow flex-col">
      <div className="relative ml-2.5 min-h-0 grow bg-white">
        <Frame />
        <button className="absolute top-px left-px" aria-label="Home view">
          <Ic w={24} h={25}>
            <path d="M12 0l12 12h-3v13h-7v-6h-3v6H3V12H0z" fill="#b0b0b0" />
          </Ic>
        </button>
        <div className="absolute top-[27px] left-[33px]">
          <ViewCube />
        </div>
        <div className="absolute right-[11px] bottom-[44px]">
          <Triad />
        </div>
        <div className="absolute bottom-2 left-[7px] flex h-6 w-[91px] items-center bg-[#f3f3f3] shadow-[1px_0_0_#c0c0c0] [&>button]:w-[22px]">
          <Tool label="Zoom extents"><Mag><path d="M8 3v6M8 4h5M8 6.500h5" stroke={D} strokeWidth="1" /></Mag></Tool>
          <Tool label="Stamp" on>{StampIcon}</Tool>
          <Tool label="Copy view">{CopyIcon}</Tool>
          <Tool label="Filter view">{FilterSmall}</Tool>
        </div>
      </div>
      <div className="mt-1 flex h-[26px] shrink-0 items-center bg-linear-to-b from-[#fafafa] to-[#f0f0f0]">
        <Grip />
        <Tool label="Arrow mode" on>
          <Ic w={10} h={14}><path d="M3 0h4v7h3l-5 7-5-7h3z" fill={R} /></Ic>
        </Tool>
        <Tool label="Find failures">{MagX}</Tool>
        <Tool label="Find next">{MagNext}</Tool>
        <div className="flex [&>button]:w-[23px]">
          <Tool label="Member U"><Member c="U" /></Tool>
          <Tool label="Member Cr"><Member c="Cr" /></Tool>
          <Tool label="Member F"><Member c="F" /></Tool>
        </div>
        <Tool label="Report">
          <Ic w={12} h={14}>
            <path d="M1 1h7l3 3v9H1z" stroke={D} strokeWidth="1.300" />
            <path d="M3 4h3M3 6.500h6M3 8.500h6M3 10.500h6" stroke={D} strokeWidth="1" />
          </Ic>
        </Tool>
        <Tool label="Print">
          <Ic w={15} h={14}>
            <path d="M3 5V1h9v4M3 9v4h9V9" stroke={D} strokeWidth="1.400" />
            <path d="M1 5h13v5H1z" stroke={D} strokeWidth="1.600" />
            <path d="M2 9.500h11" stroke={D} strokeWidth="2" />
          </Ic>
        </Tool>
        <Tool label="Export to Word"><WordIcon /></Tool>
        <Tool label="Export all to Word"><WordIcon two /></Tool>
        <Tool label="Eco">
          <Ic w={20} h={13}>
            <path d="M0 5c4-1 8 1 8 7C3 12 1 10 0 5z" fill="#4fae3a" />
            <path d="M7 12C7 4 12 1 20 0c0 8-4 13-13 12z" fill="#3f9b2c" />
            <path d="M8 12c3-5 6-8 11-11" stroke="#a6dc8f" strokeWidth="1" />
          </Ic>
        </Tool>
      </div>
      <div className={`flex h-6 shrink-0 items-center bg-linear-to-b from-[#fafafa] to-[#f2f2f2] ${UI}`}>
        <Grip />
        <Tool label="Previous brief">
          <Ic w={14} h={8}><path d="M0 4l6-4v2.500h8v3H6V8z" fill={D} /></Ic>
        </Tool>
        <span className="w-[125px] text-center text-[#1979d8]">Brief 2 of 2</span>
        <Tool label="Next brief">
          <Ic w={14} h={8}><path d="M14 4L8 0v2.500H0v3h8V8z" fill={D} /></Ic>
        </Tool>
        <Tool label="Brief settings">
          <Ic w={16} h={16}>
            <circle cx="8" cy="8" r="4.500" stroke={D} strokeWidth="1.800" />
            {[0, 45, 90, 135, 180, 225, 270, 315].map((a) => (
              <path key={a} d="M8 0v3.500" stroke={D} strokeWidth="2" transform={`rotate(${a} 8 8)`} />
            ))}
          </Ic>
        </Tool>
        <button className="flex w-2 justify-center" aria-label="Brief settings menu"><MiniCaret /></button>
        <Tool label="Pin" on>
          <Ic w={14} h={14}><path d="M8 0l6 6-2 .5L10 9l-.5 3L6 9l-5 5-1 0 0-1 5-5-3-3.500L5 4l3-2z" fill={D} /></Ic>
        </Tool>
        <label className="relative ml-px flex h-[22px] w-[74px] items-center bg-white" aria-label="Load case">
          <select className="w-full appearance-none bg-transparent pl-1 outline-none" defaultValue="2">
            <option value="2">Case 002 :</option>
          </select>
          <span className="pointer-events-none absolute right-1"><MiniCaret /></span>
        </label>
        <label className="relative ml-[3px] flex h-[22px] w-[165px] items-center bg-white" aria-label="Portion">
          <select className="w-[146px] appearance-none bg-transparent pl-1 outline-none" defaultValue="1">
            <option value="1">Portion 01: 00.000 to 08.000</option>
          </select>
          <span className="pointer-events-none absolute right-1"><MiniCaret /></span>
        </label>
      </div>
    </div>
  );
}

/* ---------- bottom form ---------- */

function Spinner({ label }: { label: string }) {
  return (
    <span className="flex w-4 shrink-0 flex-col">
      <button aria-label={`${label} up`} className="flex h-2.5 items-center justify-center bg-[#f7f7f7]">
        <Ic w={6} h={4}><path d="M0 4h6L3 0z" fill="#3f587f" /></Ic>
      </button>
      <button aria-label={`${label} down`} className="flex h-2.5 items-center justify-center bg-[#f7f7f7]">
        <Ic w={6} h={4}><path d="M0 0h6L3 4z" fill="#3f587f" /></Ic>
      </button>
    </span>
  );
}

function Combo({ id, value, width, label }: { id: string; value: string; width: string; label?: string }) {
  return (
    <span className={`${width} relative flex h-[21px] shrink-0 items-center rounded-xs border border-[#d6d6d6] border-b-[#b4b4b4] bg-[#fdfdfd]`}>
      <select id={id} aria-label={label} className="h-full w-full appearance-none bg-transparent pl-0.5 outline-none" defaultValue={value}>
        <option>{value}</option>
      </select>
      <span className="pointer-events-none absolute right-1">
        <Ic w={8} h={5}><path d="M0.500 0.500L4 4l3.500-3.500" stroke="#666" strokeWidth="1" /></Ic>
      </span>
    </span>
  );
}

const BoxI = <path d="M4 3h8M4 13h8M8 3v10" stroke={D} strokeWidth="2" />;

function BottomPanel() {
  return (
    <>
      <div className="mt-[3px] flex shrink-0 items-end gap-[3px] border-b border-white" role="tablist">
        <button role="tab" aria-selected="true" className="h-[21px] w-[188px] bg-white pt-1">Briefs and Section Sizes</button>
        <button role="tab" aria-selected="false" className="h-5 w-[117px] bg-[#f7f7f7]">Beam Design Data</button>
        <button role="tab" aria-selected="false" className="h-5 w-[166px] bg-[#f7f7f7]">Lateral Restraint - Minor Axis</button>
      </div>
      <fieldset className="mx-[3px] flex w-[1038px] shrink-0 items-start border border-[#dcdcdc] pb-px pl-1">
        <legend className="ml-1 px-0.5 leading-[15px]">Design Brief 2 of 2</legend>
        <Combo id="brief" label="Design brief" width="w-[261px]" value="0002 Bm - Member SBL 1Id 4 @ Level 1" />
        <span className="ml-0.5"><Spinner label="Brief" /></span>
        <label htmlFor="title" className="ml-2.5 w-[50px] leading-[18px] whitespace-nowrap">Brief Title</label>
        <input id="title" className="h-5 min-w-0 grow border-b border-[#868686] bg-white px-1 outline-none" />
        <span className="-mt-0.5 ml-1 flex divide-x divide-[#555] border border-[#555] bg-[#fcfcfc]">
          <button aria-label="Delete brief" className="flex h-[22px] w-6 items-center justify-center">
            <Ic w={14} h={14}><path d="M1 1l12 12M13 1L1 13" stroke={R} strokeWidth="2" /></Ic>
          </button>
          <button aria-label="Copy brief" className="flex h-[22px] w-6 items-center justify-center">{CopyIcon}</button>
          <button aria-label="Sort briefs" className="flex h-[22px] w-6 items-center justify-center">
            <Ic w={12} h={14}>
              <path d="M3 0v10M9 4v10" stroke={D} strokeWidth="1.800" />
              <path d="M0 8h6l-3 5zM6 5h6L9 0z" fill={D} />
            </Ic>
          </button>
        </span>
        <span className="mr-1 ml-1"><Spinner label="Brief order" /></span>
      </fieldset>

      <div className="flex h-[150px] shrink-0 items-stretch">
        <div className="ml-[3px] flex w-[26px] flex-col items-center gap-[9px] bg-[#f9f9f9] pt-[3px] shadow-[inset_-1px_0_0_#dcdcdc]">
          <button aria-label="Section"><Ic w={16} h={16}><rect x="1.500" y="1.500" width="13" height="13" fill="#b4b4b4" stroke={D} /><path d="M5 4h6M5 12h6M8 4v8" stroke={D} strokeWidth="1.500" /></Ic></button>
          <button aria-label="Top flange"><Ic w={16} h={16}>{BoxI}<path d="M2 5V1h12v4" stroke={D} strokeWidth="1.200" /></Ic></button>
          <button aria-label="Bottom flange"><Ic w={16} h={16}>{BoxI}<path d="M2 15h12" stroke={D} strokeWidth="1.200" /></Ic></button>
          <button aria-label="Openings"><Ic w={16} h={16}><path d="M1 2.500h14M1 13.500h14" stroke={D} strokeWidth="2" /><circle cx="5" cy="8" r="2" stroke={D} strokeWidth="1.300" /><circle cx="11" cy="8" r="2" stroke={D} strokeWidth="1.300" /></Ic></button>
          <button aria-label="Edit"><Ic w={16} h={16}><path d="M10 2H2v12h12V7" stroke={D} strokeWidth="1.400" /><path d="M5 11l1-3 7-7 2 2-7 7z" fill={D} /></Ic></button>
        </div>
        <fieldset className="ml-px w-[236px] border border-b-0 border-[#dcdcdc] pl-2">
          <legend className="-ml-1 px-0.5 leading-[15px]">Basic Section</legend>
          <div className="flex">
            <Combo id="type" label="Section type" width="w-[95px]" value="UB" />
            <span className="mx-px"><Spinner label="Section type" /></span>
            <Combo id="grade" label="Grade" width="w-[95px]" value="S 275" />
            <Spinner label="Grade" />
          </div>
          <div className="mt-px flex">
            <button aria-label="Sort by weight" className="mr-1 flex h-[21px] w-6 items-center justify-center border-r border-[#bbb] bg-[#f9f9f9]">
              <Ic w={14} h={15}><circle cx="7" cy="3" r="2" stroke={D} strokeWidth="1.500" /><path d="M3 5h8l3 10H0z" fill={D} /></Ic>
            </button>
            <Combo id="section" label="Section size" width="w-[180px]" value="0052 305x165 UB 46" />
            <Spinner label="Section size" />
          </div>
          <div className="flex items-center">
            <label htmlFor="hmin" className="w-10 pl-0.5 whitespace-nowrap">H Min.</label>
            <input id="hmin" defaultValue="0" className="h-[21px] w-[53px] border border-[#5a5a5a] bg-white px-px pb-0.5 outline-none" />
            <label htmlFor="hmax" className="ml-9 w-[42px] whitespace-nowrap">H Max.</label>
            <input id="hmax" defaultValue="0" className="h-[21px] w-[53px] border border-[#5a5a5a] bg-white px-px pb-0.5 outline-none" />
          </div>
          <label className="mt-[5px] flex items-center gap-1.5">
            <input type="checkbox" className="h-[13px] w-[13px] appearance-none rounded-xs border border-[#666] bg-[#f8f8f8]" />
            Double
          </label>
        </fieldset>
        <div className="ml-[476px] flex w-[299px] flex-col">
          <fieldset className="h-[48px] border border-[#dcdcdc] pl-1">
            <legend className="ml-0.5 px-0.5 leading-[15px]">Auto Design and Scan Failures</legend>
            <div className="mt-1 mr-0.5 flex grow justify-between border-r border-[#c4c4c4] pr-2 pl-1.5">
              <Tool label="Design member"><Ic w={12} h={12}><path d="M2 10l8-8" stroke={D} strokeWidth="2" /><circle cx="2" cy="10" r="1.800" fill={D} /><circle cx="10" cy="2" r="1.800" fill={D} /></Ic></Tool>
              <Tool label="Design group"><Multi /></Tool>
              <Tool label="Design selection"><Multi><rect x="1" y="1" width="14" height="14" stroke={R} strokeWidth="1" strokeDasharray="3 1.500" /></Multi></Tool>
              <Tool label="Refresh">
                <Ic w={14} h={14}><path d="M2.500 6a4.800 4.800 0 0 1 9 0M11.500 8.500a4.800 4.800 0 0 1-9 0" stroke={D} strokeWidth="1.300" /><path d="M9 6h5l-2.500 3zM0 8h5L2.500 5z" fill={D} /></Ic>
              </Tool>
              <Tool label="Scan failures">{MagX}</Tool>
              <Tool label="Next failure">{MagNext}</Tool>
              <Tool label="Clear failures"><Multi c="#aaaaaa"><path d="M10 10l4 4M14 10l-4 4" stroke="#aaaaaa" strokeWidth="1" /></Multi></Tool>
            </div>
          </fieldset>
          <fieldset className="mt-1.5 grow border border-b-0 border-[#dcdcdc] pl-1.5">
            <legend className="px-0.5 leading-[15px]">Member View Filtering</legend>
            <div className="mt-1 flex items-center">
              <label htmlFor="fsec" className="w-[91px]">Filter Section</label>
              <Combo id="fsec" width="w-[183px]" value="All Sections" />
              <Spinner label="Filter section" />
            </div>
            <div className="mt-0.5 flex items-center">
              <label htmlFor="fgrp" className="w-[91px] whitespace-nowrap">Filter Mem. Group</label>
              <Combo id="fgrp" width="w-[183px]" value="All Member Viewing Groups" />
              <Spinner label="Filter group" />
            </div>
            <div className="mt-[3px] flex items-center">
              <span className="w-[91px]">Filter Orientation</span>
              {['A', 'H', 'V', 'I', 'E', 'N'].map((c, i) => (
                <button key={c} className={i === 5 ? 'h-[25px] w-[18px] border border-[#0078d7]' : 'h-[25px] w-[18px]'}>{c}</button>
              ))}
              {['H', 'V', 'I', 'E', 'N'].map((c) => (
                <button key={c} className="h-[25px] w-[18px] text-[#ff0010]">{c}</button>
              ))}
            </div>
          </fieldset>
        </div>
      </div>

      <footer className={`flex h-[15px] shrink-0 items-start overflow-hidden border-t border-[#d0d0d0] pt-[3px] ${UI}`}>
        <div className="h-3 w-[190px] bg-[#107c10]" role="progressbar" aria-label="Progress" />
        <button className="ml-[3px] flex items-center gap-1.5" aria-label="Print status">
          <Ic w={17} h={16}>
            <path d="M6 1h8l-2 6H4z" fill="#e8eef8" stroke="#7d8ba5" />
            <path d="M1 8l3-3h11l1 3v5H1z" fill="#9aa7bd" stroke="#4e5c77" />
            <path d="M3 10h9" stroke="#4caf50" strokeWidth="1.500" />
          </Ic>
          <MiniCaret />
        </button>
        <span className="ml-3.5 leading-4">PDF session closed</span>
      </footer>
    </>
  );
}

export default function App() {
  return (
    <div className="flex h-screen flex-col overflow-hidden bg-[#f0f0f0] font-['DejaVu_Sans_Condensed','DejaVu_Sans',sans-serif] text-[11px] text-black">
      <nav className={`flex h-[22px] shrink-0 items-center gap-[21px] bg-linear-to-r from-[#f0f0f0] to-[#fcfcfc] pb-0.5 pl-[11px] ${UI}`}>
        {['File', 'Edit-View', 'Integrated Design', 'Automatic Design', 'Print', 'Export to Word', 'Codes', 'Options', 'Help'].map((m) => (
          <button key={m} className="whitespace-nowrap">{m}</button>
        ))}
      </nav>
      <div className={UI}>
        <Ribbon />
      </div>
      <main className="mt-[3px] flex min-h-0 grow">
        <div className="flex w-[622px] shrink-0 flex-col">
          <Report />
          <Results />
        </div>
        <Viewer />
      </main>
      <BottomPanel />
    </div>
  );
}
